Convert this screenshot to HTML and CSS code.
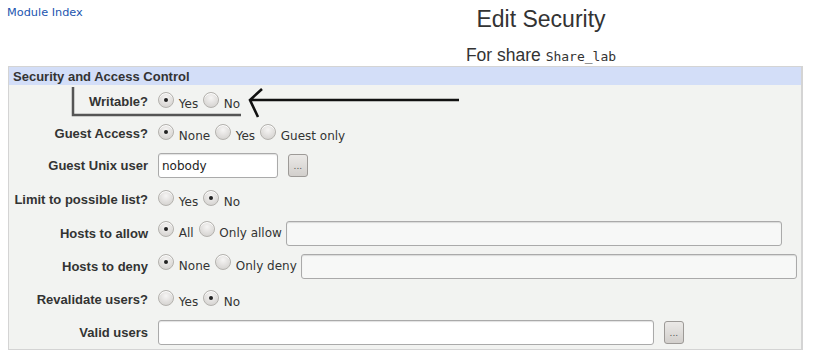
FILE: index.html
```html
<!DOCTYPE html>
<html lang="en">
<head>
  <meta charset="UTF-8">
  <title>Edit Security</title>
  <link rel="stylesheet" href="styles.css">
</head>
<body>
  <div class="header">
    <a class="module-link" href="#">Module Index</a>
    <h1 class="title">Edit Security</h1>
  </div>
  <h2 class="subtitle">For share <code>Share_lab</code></h2>

  <div class="panel">
    <table class="form">
      <tr class="head"><th colspan="2">Security and Access Control</th></tr>
      <tr>
        <td class="label">Writable?</td>
        <td><input type="radio" name="w" checked> Yes <input type="radio" name="w"> No</td>
      </tr>
      <tr class="short">
        <td class="label">Guest Access?</td>
        <td><input type="radio" name="g" checked> None <input type="radio" name="g"> Yes <input type="radio" name="g"> Guest only</td>
      </tr>
      <tr>
        <td class="label">Guest Unix user</td>
        <td><input type="text" class="field small" value="nobody"> <button class="pick">...</button></td>
      </tr>
      <tr class="tall">
        <td class="label">Limit to possible list?</td>
        <td><input type="radio" name="l"> Yes <input type="radio" name="l" checked> No</td>
      </tr>
      <tr>
        <td class="label">Hosts to allow</td>
        <td><input type="radio" name="a" checked> All <input type="radio" name="a"> Only allow <input type="text" class="field wide off"></td>
      </tr>
      <tr>
        <td class="label">Hosts to deny</td>
        <td><input type="radio" name="d" checked> None <input type="radio" name="d"> Only deny <input type="text" class="field wide off"></td>
      </tr>
      <tr>
        <td class="label">Revalidate users?</td>
        <td><input type="radio" name="r"> Yes <input type="radio" name="r" checked> No</td>
      </tr>
      <tr>
        <td class="label">Valid users</td>
        <td><input type="text" class="field wide"> <button class="pick">...</button></td>
      </tr>
    </table>
  </div>

  <!-- hand drawn markup over the screenshot -->
  <svg class="marks" width="832" height="352" viewBox="0 0 832 352">
    <path d="M73 87 V115 H241" fill="none" stroke="#555" stroke-width="2.5"/>
    <path d="M459 100 H250 M262 89 L250 100 L258 117" fill="none" stroke="#111" stroke-width="2.6"/>
  </svg>
</body>
</html>
```

FILE: styles.css
```css
* {
  box-sizing: border-box;
}
body {
  margin: 0;
  width: 832px;
  height: 352px;
  overflow: hidden;
  background: #fff;
  color: #333;
  font-family: "DejaVu Sans", sans-serif;
  font-size: 12px;
  position: relative;
}
.header {
  display: flex;
  align-items: flex-start;
  height: 40px;
}
.module-link {
  width: 250px;
  padding: 6px 0 0 7px;
  color: #2255b0;
  text-decoration: none;
  font-size: 11.3px;
}
.title {
  flex: 1;
  margin: 0;
  padding-top: 6px;
  text-align: center;
  font-family: "Liberation Sans", Arial, sans-serif;
  font-weight: normal;
  font-size: 23px;
  color: #333;
}
.subtitle {
  margin: 0;
  padding: 5px 0 0 250px;
  height: 26px;
  text-align: center;
  font-family: "Liberation Sans", Arial, sans-serif;
  font-weight: normal;
  font-size: 17.5px;
  color: #333;
}
.subtitle code {
  font-family: "DejaVu Sans Mono", monospace;
  font-size: 13px;
}
.panel {
  margin-left: 8px;
  width: 795px;
  border: 1px solid #d4d4d4;
  border-right-width: 2px;
  background: #f2f3f1;
}
.form {
  width: 100%;
  border-collapse: collapse;
}
.form .head th {
  height: 18px;
  padding: 0 4px;
  background: #d3def8;
  text-align: left;
  font-family: "Liberation Sans", Arial, sans-serif;
  font-size: 13px;
  font-weight: bold;
  color: #333;
}
.form td {
  height: 33px;
  padding: 0 2px;
  white-space: nowrap;
}
.form tr.short td {
  height: 31px;
}
.form tr.tall td {
  height: 35px;
}
.form td.label {
  width: 146px;
  padding-right: 7px;
  text-align: right;
  font-family: "Liberation Sans", Arial, sans-serif;
  font-size: 13px;
  font-weight: bold;
  color: #333;
}
input[type="radio"] {
  appearance: none;
  -webkit-appearance: none;
  display: inline-block;
  width: 16px;
  height: 16px;
  margin: 0 1px 0 1px;
  border: 1px solid #b4b2ae;
  border-radius: 50%;
  background: radial-gradient(circle at 50% 35%, #f6f5f4 0%, #dedcda 60%, #cfcdca 100%);
  box-shadow: inset 0 1px 0 #fff;
  position: relative;
  vertical-align: baseline;
}
input[type="radio"]:checked::after {
  content: "";
  position: absolute;
  left: 5px;
  top: 5px;
  width: 4px;
  height: 4px;
  border-radius: 50%;
  background: #222;
}
.field {
  height: 25px;
  border: 1px solid #aaa;
  border-radius: 3px;
  background: #fff;
  box-shadow: inset 0 1px 1px rgba(0,0,0,0.12);
  font-family: "DejaVu Sans", sans-serif;
  font-size: 12px;
  color: #222;
  padding: 2px 3px;
  vertical-align: middle;
}
.field.small {
  width: 120px;
  margin-left: 1px;
}
.field.wide {
  width: 496px;
  margin-left: 1px;
}
.field.off {
  background: #f7f8f7;
  margin-left: 0;
}
.pick {
  width: 20px;
  height: 23px;
  padding: 0;
  border: 1px solid #9d9a97;
  border-radius: 3px;
  background: linear-gradient(#ebe9e7, #d2cfcc);
  font-family: "DejaVu Sans", sans-serif;
  font-size: 9px;
  color: #555;
  vertical-align: middle;
  margin-left: 6px;
}
.marks {
  position: absolute;
  left: 0;
  top: 0;
  pointer-events: none;
}
```
